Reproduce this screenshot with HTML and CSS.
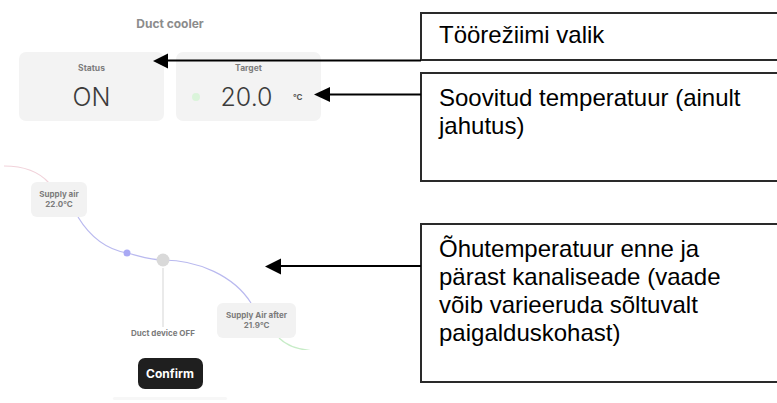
FILE: index.html
```html
<!DOCTYPE html>
<html lang="et">
<head>
  <meta charset="UTF-8">
  <title>Duct cooler - juhend</title>
  <link rel="stylesheet" href="styles.css">
</head>
<body>
  <div class="leht">
    <section class="telefon">
      <h1 class="pealkiri">Duct cooler</h1>

      <div class="kaardid">
        <div class="kaart">
          <div class="kaart-silt">Status</div>
          <div class="kaart-rida keskel">
            <span class="suur">ON</span>
          </div>
        </div>
        <div class="kaart">
          <div class="kaart-silt">Target</div>
          <div class="kaart-rida">
            <span class="tapp"></span>
            <span class="suur">20.0</span>
            <span class="uhik">°C</span>
          </div>
        </div>
      </div>

      <div class="skeem">
        <svg class="skeem-jooned" width="340" height="190" viewBox="0 0 340 190">
          <path d="M4 6 Q34 6 49 23" fill="none" stroke="#f1d2da" stroke-width="1.2"/>
          <path d="M78 57 C92 80 110 90 127 93 C140 96 150 100 163 100 C198 100 234 116 251 143" fill="none" stroke="#b9b9ef" stroke-width="1.2"/>
          <path d="M163 108 L163 167" stroke="#dcdcdc" stroke-width="1.2"/>
          <path d="M279 178 Q292 191 320 191" fill="none" stroke="#c7ecc7" stroke-width="1.2"/>
          <circle cx="127" cy="93" r="3.5" fill="#a9a9f4"/>
          <circle cx="163" cy="100" r="6.5" fill="#d9d9d9"/>
        </svg>
        <div class="solm solm-sisse">Supply air<br>22.0°C</div>
        <div class="solm solm-valja">Supply Air after<br>21.9°C</div>
        <div class="seade">Duct device OFF</div>
      </div>

      <button class="kinnita">Confirm</button>
      <div class="kodu-riba"></div>
    </section>

    <aside class="selgitused">
      <div class="kast kast-esimene">
        <p>Töörežiimi valik</p>
      </div>
      <div class="kast kast-teine">
        <p>Soovitud temperatuur (ainult jahutus)</p>
      </div>
      <div class="kast kast-kolmas">
        <p>Õhutemperatuur enne ja pärast kanaliseade (vaade võib varieeruda sõltuvalt paigalduskohast)</p>
      </div>
    </aside>

    <!-- nooled kasti juurest pildi peale -->
    <svg class="nooled" width="777" height="403" viewBox="0 0 777 403">
      <path d="M167 60.5 H421" stroke="#000" stroke-width="2"/>
      <polygon points="153,61 168,53.5 168,68.5" fill="#000"/>
      <path d="M329 94.5 H421" stroke="#000" stroke-width="2"/>
      <polygon points="314,94.5 330,87 330,102" fill="#000"/>
      <path d="M280 266 H421" stroke="#000" stroke-width="2"/>
      <polygon points="265,266.5 281,258.5 281,274.5" fill="#000"/>
    </svg>
  </div>
</body>
</html>
```

FILE: styles.css
```css
html, body {
  margin: 0;
  background: #fff;
  overflow: hidden;
}

.leht {
  position: relative;
  width: 777px;
  height: 403px;
  display: flex;
  overflow: hidden;
}

.telefon {
  width: 340px;
  flex: 0 0 340px;
  padding: 17px 0 0 0;
  box-sizing: border-box;
  display: flex;
  flex-direction: column;
  align-items: center;
  font-family: Inter, "Noto Sans", sans-serif;
}

.pealkiri {
  margin: 0;
  font-size: 12px;
  line-height: 14px;
  font-weight: 700;
  color: #8c8c8c;
}

.kaardid {
  margin-top: 21px;
  display: grid;
  grid-template-columns: 145px 145px;
  gap: 12px;
  align-self: flex-start;
  margin-left: 19px;
}

.kaart {
  height: 69px;
  box-sizing: border-box;
  padding-top: 12px;
  background: #f3f3f3;
  border-radius: 7px;
  display: flex;
  flex-direction: column;
  align-items: center;
}

.kaart-silt {
  font-size: 8.5px;
  line-height: 9px;
  font-weight: 700;
  color: #7d7d7d;
}

.kaart-rida {
  margin-top: 9px;
  height: 30px;
  width: 100%;
  box-sizing: border-box;
  padding: 0 16px 0 16px;
  display: flex;
  align-items: center;
  justify-content: space-between;
}

.kaart-rida.keskel {
  justify-content: center;
}

.suur {
  font-size: 25px;
  font-weight: 300;
  color: #3c3c3c;
  line-height: 30px;
}

.tapp {
  width: 8px;
  height: 8px;
  border-radius: 50%;
  background: #daf4da;
}

.uhik {
  font-size: 8px;
  font-weight: 700;
  color: #555;
  width: 12px;
}

.skeem {
  position: relative;
  margin-top: 39px;
  width: 340px;
  height: 190px;
}

.skeem-jooned {
  display: block;
}

.solm {
  position: absolute;
  box-sizing: border-box;
  height: 35px;
  background: #f2f2f2;
  border-radius: 6px;
  display: flex;
  align-items: center;
  justify-content: center;
  text-align: center;
  font-size: 8px;
  line-height: 9.5px;
  font-weight: 700;
  color: #7b7b7b;
}

.solm-sisse {
  left: 31px;
  top: 22px;
  width: 56px;
}

.solm-valja {
  left: 217px;
  top: 143px;
  width: 79px;
}

.seade {
  position: absolute;
  left: 113px;
  width: 100px;
  top: 168px;
  text-align: center;
  font-size: 8px;
  line-height: 10px;
  font-weight: 700;
  color: #7b7b7b;
}

.kinnita {
  margin-top: 8px;
  width: 65px;
  height: 31px;
  border: none;
  border-radius: 7px;
  background: #1f1f1f;
  color: #fff;
  font-family: Inter, "Noto Sans", sans-serif;
  font-size: 12px;
  font-weight: 700;
  padding: 0;
}

.kodu-riba {
  margin-top: 8px;
  width: 114px;
  height: 3px;
  border-radius: 2px;
  background: #f7f7f7;
}

.selgitused {
  margin-left: 80px;
  padding-top: 12px;
  flex: 0 0 380px;
  display: flex;
  flex-direction: column;
  font-family: "Liberation Sans", Arial, sans-serif;
  color: #000;
}

.kast {
  box-sizing: border-box;
  border: 2px solid #2a2a2a;
  padding: 10px 0 0 17px;
}

.kast p {
  margin: 0;
  width: 316px;
  font-size: 24px;
  line-height: 28px;
}

.kast-esimene {
  height: 49px;
  padding-top: 7px;
}

.kast-teine {
  height: 110px;
  margin-top: 11px;
}

.kast-kolmas {
  height: 160px;
  margin-top: 41px;
}

.nooled {
  position: absolute;
  left: 0;
  top: 0;
  pointer-events: none;
}
```
